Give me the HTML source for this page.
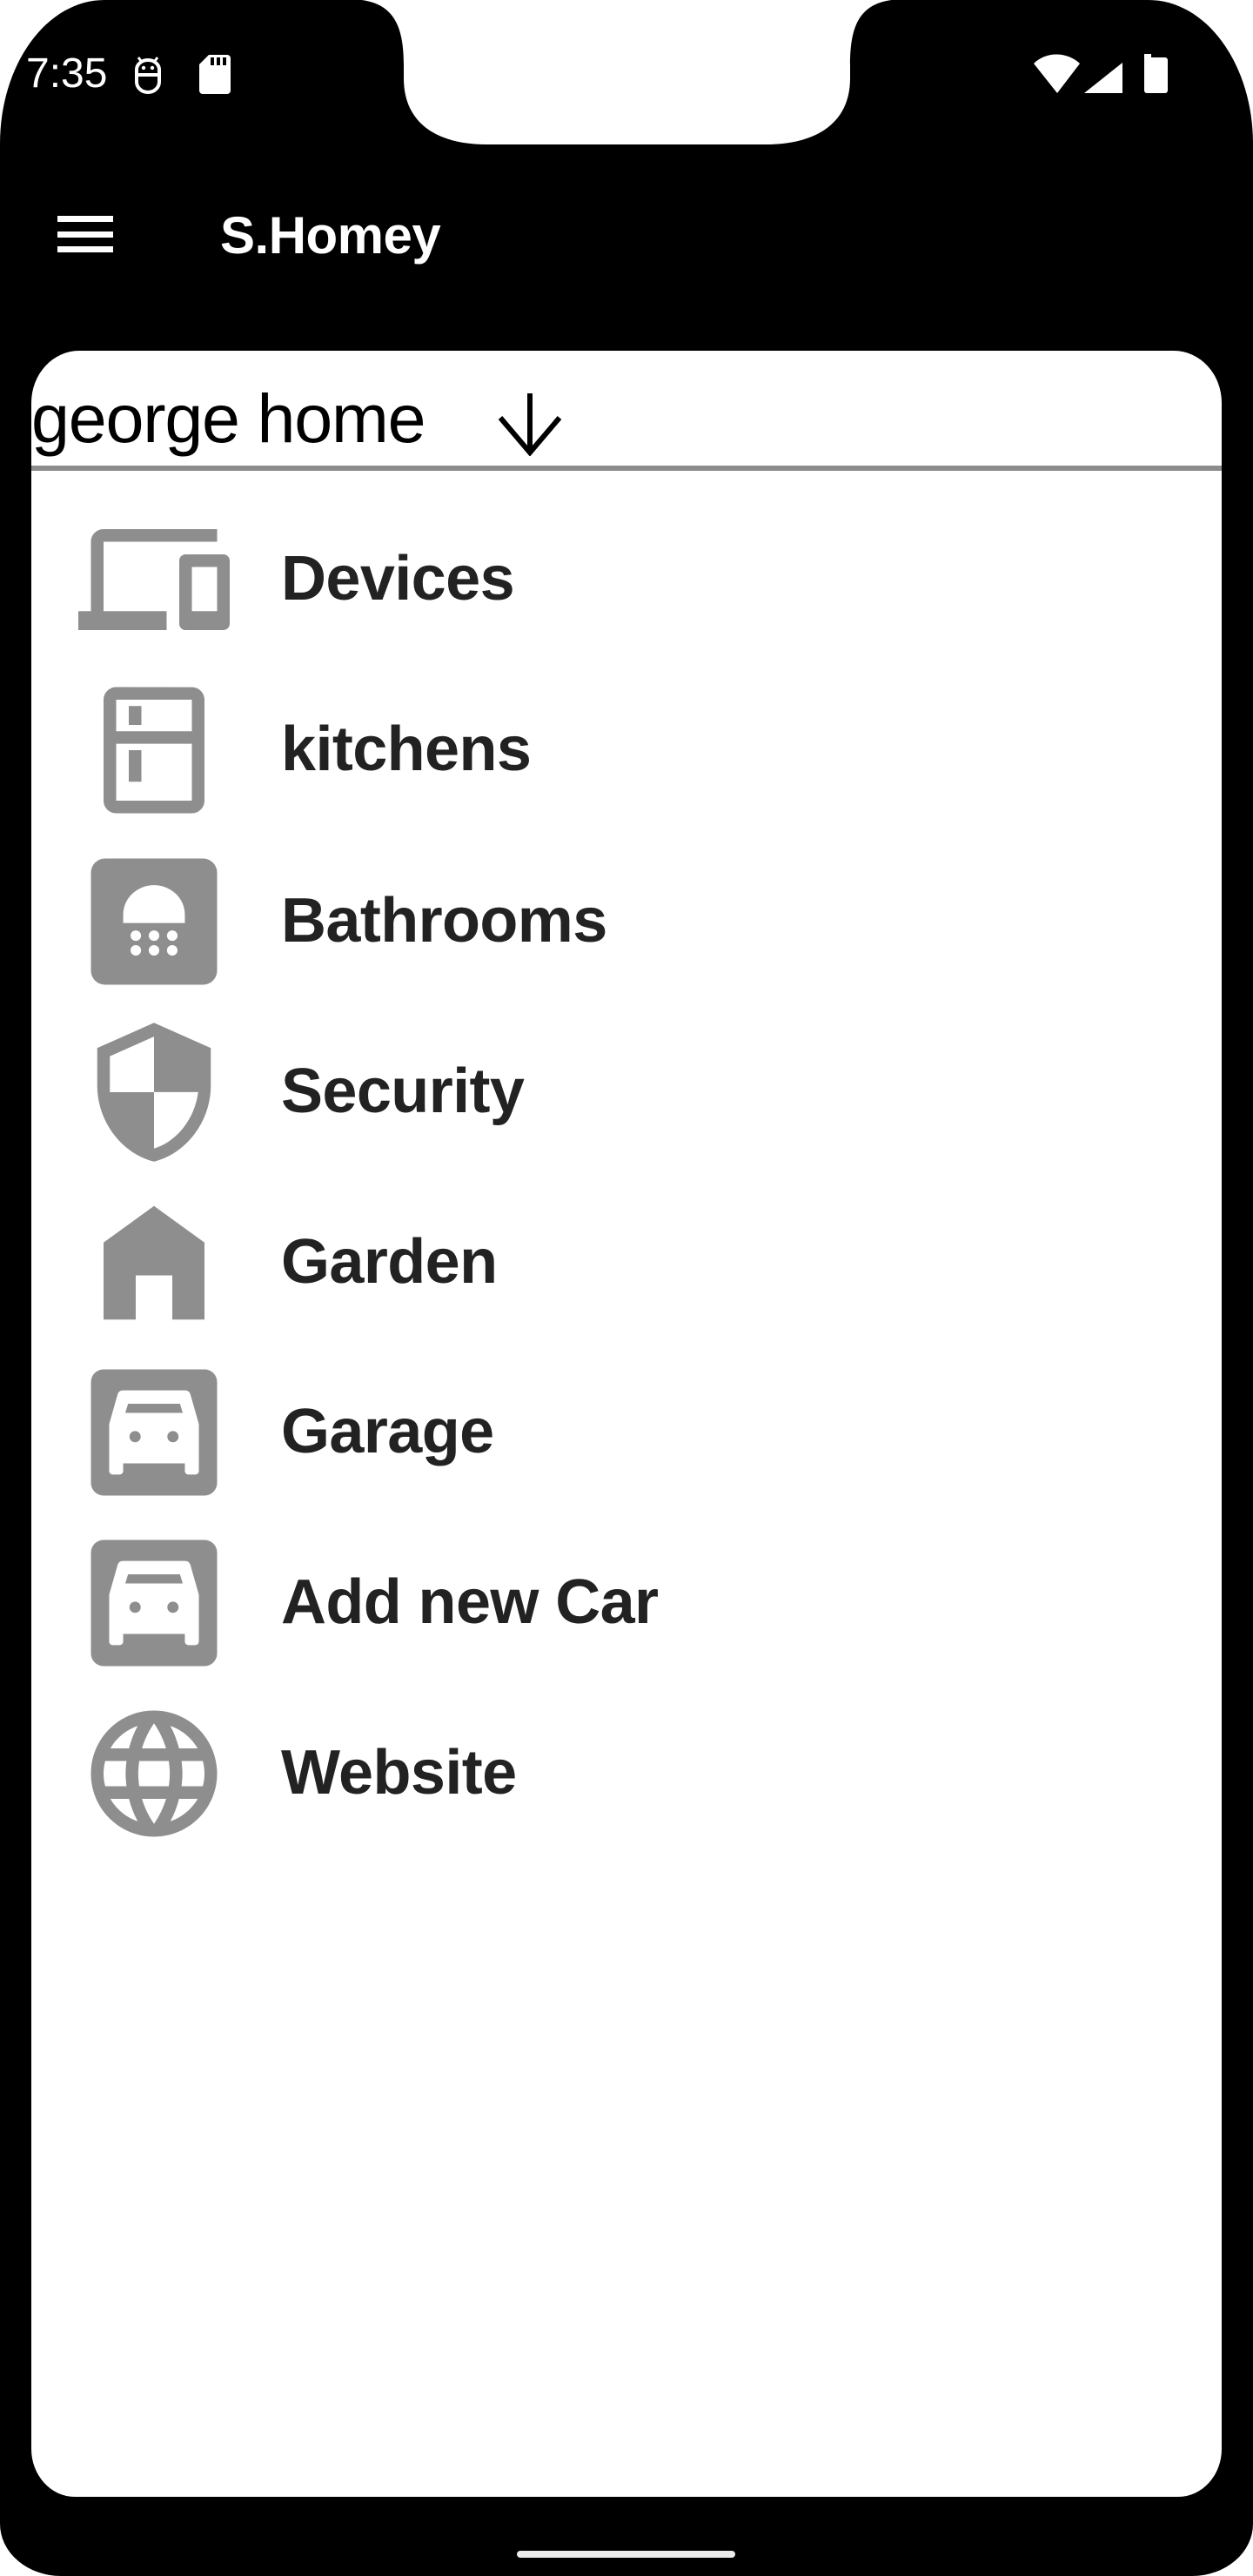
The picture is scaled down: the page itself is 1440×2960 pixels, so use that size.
<!DOCTYPE html>
<html><head><meta charset="utf-8">
<style>
html,body{margin:0;padding:0;}
body{width:1440px;height:2960px;background:#fff;position:relative;overflow:hidden;font-family:"Liberation Sans",sans-serif;}
.abs{position:absolute;}
.item{position:absolute;left:323px;font-weight:bold;font-size:72px;letter-spacing:-0.6px;color:#222;line-height:72px;white-space:nowrap;}
.ic{position:absolute;left:90px;width:174px;height:174px;}
</style></head><body>
<div class="abs" style="left:0;top:0;width:1440px;height:2960px;background:#000;border-radius:120px 120px 70px 70px / 165px 165px 60px 60px;"></div>
<svg class="abs" style="left:0;top:0" width="1440" height="200" viewBox="0 0 1440 200">
<path d="M400,-1 C450,-1 464,25 464,75 V90 C464,140 500,166 560,166 H880 C940,166 977,140 977,90 V75 C977,25 990,-1 1040,-1 Z" fill="#fff"/>
</svg>
<div class="abs" style="left:30px;top:57px;font-size:48px;color:#fff;line-height:56px;">7:35</div>
<svg class="abs" style="left:150px;top:60px" width="40" height="50" viewBox="0 0 40 50">
<path d="M9 6 L12 10 M31 6 L28 10" stroke="#fff" stroke-width="3" fill="none"/>
<path d="M7 26 V20 A13 11 0 0 1 33 20 V26 H7 Z" fill="none" stroke="#fff" stroke-width="4"/>
<path d="M7 26 V34 A13 12 0 0 0 33 34 V28" fill="none" stroke="#fff" stroke-width="4"/>
<circle cx="15" cy="18" r="2.2" fill="#fff"/><circle cx="25" cy="18" r="2.2" fill="#fff"/>
</svg>
<svg class="abs" style="left:229px;top:63px" width="36" height="45" viewBox="0 0 36 45">
<path d="M11 0 H32 a4 4 0 0 1 4 4 V41 a4 4 0 0 1 -4 4 H4 a4 4 0 0 1 -4 -4 V11 Z" fill="#fff"/>
<rect x="13" y="3" width="4" height="9" fill="#000"/><rect x="20" y="3" width="4" height="9" fill="#000"/><rect x="27" y="3" width="4" height="9" fill="#000"/>
</svg>
<svg class="abs" style="left:1186px;top:60px" width="160" height="50" viewBox="0 0 160 50">
<path d="M2 13 C16 -1 40 -1 55 13 L29 47 Z" fill="#fff"/>
<path d="M60 47 L104 12 V47 Z" fill="#fff"/>
<rect x="129" y="2" width="8" height="6" fill="#fff"/>
<rect x="129" y="6" width="27" height="41" rx="3" fill="#fff"/>
</svg>
<div class="abs" style="left:66px;top:248px;width:64px;height:7px;background:#fff"></div>
<div class="abs" style="left:66px;top:266px;width:64px;height:7px;background:#fff"></div>
<div class="abs" style="left:66px;top:283px;width:64px;height:7px;background:#fff"></div>
<div class="abs" style="left:253px;top:239px;font-size:60px;font-weight:bold;letter-spacing:-0.5px;color:#fff;line-height:64px;">S.Homey</div>
<div class="abs" style="left:36px;top:403px;width:1368px;height:2466px;background:#fff;border-radius:55px 55px 50px 50px / 60px 60px 55px 55px;"></div>
<div class="abs" style="left:36px;top:441px;font-size:79px;letter-spacing:-1.2px;color:#000;line-height:80px;white-space:nowrap;">george home</div>
<svg class="abs" style="left:570px;top:450px" width="78" height="74" viewBox="0 0 78 74">
<path d="M39 2 V68 M5 30 L39 70 L73 30" fill="none" stroke="#000" stroke-width="6"/>
</svg>
<div class="abs" style="left:36px;top:535px;width:1368px;height:6px;background:#8c8c8c"></div>

<svg class="ic" style="top:579px" viewBox="0 0 24 24"><path fill="#8e8e8e" d="M4 6h18V4H4c-1.1 0-2 .9-2 2v11H0v3h14v-3H4V6zm19 2h-6c-.55 0-1 .45-1 1v10c0 .55.45 1 1 1h6c.55 0 1-.45 1-1V9c0-.55-.45-1-1-1zm-1 9h-4v-7h4v7z"/></svg>
<div class="item" style="top:629px">Devices</div>

<svg class="ic" style="top:775px" viewBox="0 0 24 24"><path fill="#8e8e8e" d="M18 2.01L6 2c-1.11 0-2 .89-2 2v16c0 1.1.89 2 2 2h12c1.11 0 2-.9 2-2V4c0-1.11-.89-1.99-2-1.99zM18 20H6v-9.02h12V20zm0-11H6V4h12v5zM8 5h2v3H8zm0 7h2v5H8z"/></svg>
<div class="item" style="top:825px">kitchens</div>

<svg class="ic" style="top:972px" viewBox="0 0 24 24">
<g transform="translate(12 12) scale(1.111) translate(-12 -12)">
<rect x="3" y="3" width="18" height="18" rx="2" fill="#8e8e8e"/>
<path d="M7.6 12.2V11a4.4 4.2 0 0 1 8.8 0v1.2z" fill="#fff"/>
<g fill="#fff"><circle cx="9.4" cy="14" r=".75"/><circle cx="12" cy="14" r=".75"/><circle cx="14.6" cy="14" r=".75"/><circle cx="9.4" cy="16.1" r=".75"/><circle cx="12" cy="16.1" r=".75"/><circle cx="14.6" cy="16.1" r=".75"/></g>
</g>
</svg>
<div class="item" style="top:1022px">Bathrooms</div>

<svg class="ic" style="top:1168px" viewBox="0 0 24 24"><path fill="#8e8e8e" d="M12 1L3 5v6c0 5.55 3.84 10.74 9 12 5.16-1.26 9-6.45 9-12V5l-9-4zm0 10.99h7c-.53 4.12-3.28 7.790-7 8.94V12H5V6.3l7-3.11v8.8z"/></svg>
<div class="item" style="top:1218px">Security</div>

<svg class="ic" style="top:1364px" viewBox="0 0 24 24"><path fill="#8e8e8e" d="M12 3L4 8.8V21h5.1v-7h5.8v7H20V8.8z"/></svg>
<div class="item" style="top:1414px">Garden</div>

<svg class="ic" style="top:1559px" viewBox="0 0 24 24">
<g transform="translate(12 12) scale(1.111) translate(-12 -12)">
<rect x="3" y="3" width="18" height="18" rx="1.8" fill="#8e8e8e"/>
<path d="M7.6 6h8.8c.4 0 .7.2.8.6L18.4 10.8V17.5a.5.5 0 0 1-.5.5h-1a.5.5 0 0 1-.5-.5V16.4H7.6V17.5a.5.5 0 0 1-.5.5H6.1a.5.5 0 0 1-.5-.5V10.8L6.8 6.6c.1-.4.4-.6.8-.6z" fill="#fff"/>
<path d="M8.3 7.9h7.4l.4 1.3H7.9z" fill="#8e8e8e"/>
<circle cx="9.3" cy="12.6" r=".8" fill="#8e8e8e"/><circle cx="14.7" cy="12.6" r=".8" fill="#8e8e8e"/>
</g>
</svg>
<div class="item" style="top:1609px">Garage</div>

<svg class="ic" style="top:1755px" viewBox="0 0 24 24">
<g transform="translate(12 12) scale(1.111) translate(-12 -12)">
<rect x="3" y="3" width="18" height="18" rx="1.8" fill="#8e8e8e"/>
<path d="M7.6 6h8.8c.4 0 .7.2.8.6L18.4 10.8V17.5a.5.5 0 0 1-.5.5h-1a.5.5 0 0 1-.5-.5V16.4H7.6V17.5a.5.5 0 0 1-.5.5H6.1a.5.5 0 0 1-.5-.5V10.8L6.8 6.6c.1-.4.4-.6.8-.6z" fill="#fff"/>
<path d="M8.3 7.9h7.4l.4 1.3H7.9z" fill="#8e8e8e"/>
<circle cx="9.3" cy="12.6" r=".8" fill="#8e8e8e"/><circle cx="14.7" cy="12.6" r=".8" fill="#8e8e8e"/>
</g>
</svg>
<div class="item" style="top:1805px">Add new Car</div>

<svg class="ic" style="top:1951px" viewBox="0 0 24 24"><path fill="#8e8e8e" d="M11.99 2C6.47 2 2 6.48 2 12s4.47 10 9.99 10C17.52 22 22 17.52 22 12S17.52 2 11.99 2zm6.93 6h-2.95c-.32-1.25-.78-2.45-1.38-3.56 1.84.63 3.37 1.91 4.33 3.56zM12 4.04c.83 1.2 1.48 2.53 1.91 3.96h-3.82c.43-1.43 1.08-2.76 1.91-3.96zM4.26 14C4.1 13.36 4 12.69 4 12s.1-1.36.26-2h3.38c-.08.66-.14 1.32-.14 2 0 .68.06 1.34.14 2H4.26zm.82 2h2.95c.32 1.25.78 2.45 1.38 3.56-1.84-.63-3.37-1.9-4.33-3.56zm2.95-8H5.08c.96-1.66 2.49-2.93 4.33-3.56C8.81 5.55 8.35 6.75 8.03 8zM12 19.96c-.83-1.2-1.48-2.53-1.91-3.96h3.82c-.43 1.43-1.08 2.76-1.91 3.96zM14.34 14H9.66c-.09-.66-.16-1.32-.16-2 0-.68.07-1.35.16-2h4.68c.09.65.16 1.32.16 2 0 .68-.07 1.34-.16 2zm.25 5.56c.6-1.11 1.06-2.31 1.38-3.56h2.95c-.96 1.65-2.49 2.93-4.33 3.56zM16.36 14c.08-.66.14-1.32.14-2 0-.68-.06-1.34-.14-2h3.38c.16.64.26 1.31.26 2s-.1 1.36-.26 2h-3.38z"/></svg>
<div class="item" style="top:2001px">Website</div>

<div class="abs" style="left:594px;top:2931px;width:251px;height:8px;border-radius:4px;background:#ebebeb"></div>
</body></html>
